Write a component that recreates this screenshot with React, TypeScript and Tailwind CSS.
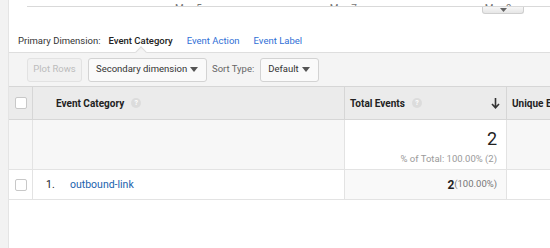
const caret = (
  <svg width="8" height="5" viewBox="0 0 8 5" className="shrink-0">
    <path d="M0 0h8L4 5z" fill="#555" />
  </svg>
)

function HelpIcon() {
  return (
    <span className="ml-[7px] inline-flex h-[10px] w-[10px] items-center justify-center rounded-full bg-[#dcdcdc] text-[7px] font-bold leading-none text-white">
      ?
    </span>
  )
}

function Checkbox({ size = 12 }: { size?: number }) {
  return (
    <span
      className="block rounded-[2px] border border-[#c8c8c8] bg-white"
      style={{ width: size, height: size }}
    />
  )
}

export default function App() {
  return (
    <div className="flex h-[248px] w-[550px] overflow-hidden bg-white font-['Roboto',sans-serif] text-[#222]">
      {/* left rail */}
      <div className="w-[9px] shrink-0 border-r border-[#e4e4e4] bg-[#f2f2f2]" />

      <div className="flex min-w-0 flex-1 flex-col">
        {/* tail of the chart above */}
        <div className="ml-[18px] flex h-[6px] items-end overflow-hidden text-[10px] leading-[12px] text-[#777]">
          <span className="mb-[-9px] ml-[2px]">...</span>
          <span className="mb-[-9px] ml-[138px]">May 5</span>
          <span className="mb-[-9px] ml-[128px]">May 7</span>
          <span className="mb-[-9px] ml-[128px]">May 9</span>
        </div>
        <div className="ml-[18px] h-[1px] bg-[#d9d9d9]" />
        <div className="ml-[473px] flex h-[7px] w-[42px] items-center justify-center rounded-b-[3px] border border-t-0 border-[#cfcfcf] bg-gradient-to-b from-[#f7f7f7] to-[#e6e6e6]">
          <svg width="7" height="4" viewBox="0 0 7 4">
            <path d="M0 0h7L3.5 4z" fill="#666" />
          </svg>
        </div>

        {/* primary dimension */}
        <div className="mt-[16px] flex h-[22px] items-center whitespace-nowrap pl-[9px] text-[9.5px]">
          <span className="text-[#333]">Primary Dimension:</span>
          <span className="ml-[8px] font-medium text-[#222]">Event Category</span>
          <span className="ml-[14px] text-[#2f6fd6]">Event Action</span>
          <span className="ml-[14px] text-[#2f6fd6]">Event Label</span>
        </div>

        {/* toolbar */}
        <div className="relative flex h-[34px] items-center whitespace-nowrap border-t border-[#dedede] bg-[#f4f4f4] pl-[18px] text-[9.5px]">
          <span className="absolute left-[128px] top-[-5px] h-[8px] w-[8px] rotate-45 border-l border-t border-[#dedede] bg-[#f4f4f4]" />
          <button className="h-[24px] w-[55px] rounded-[3px] border border-[#e2e2e2] bg-[#f1f1f1] text-[#bcbcbc]">
            Plot Rows
          </button>
          <button className="ml-[6px] flex h-[24px] w-[119px] items-center justify-between rounded-[3px] border border-[#d3d3d3] bg-[#fafafa] pl-[7px] pr-[8px] text-[#333]">
            <span>Secondary dimension</span>
            {caret}
          </button>
          <span className="ml-[5px] text-[#666]">Sort Type:</span>
          <button className="ml-[6px] flex h-[24px] w-[59px] items-center justify-between rounded-[3px] border border-[#d3d3d3] bg-[#fafafa] pl-[7px] pr-[8px] text-[#333]">
            <span>Default</span>
            {caret}
          </button>
        </div>

        {/* table */}
        <div className="grid grid-cols-[24px_312px_162px_1fr] text-[10px]">
          {/* header */}
          <div className="flex h-[34px] items-center justify-center border-b border-r border-t border-[#d6d6d6] bg-[#ebebeb]">
            <Checkbox />
          </div>
          <div className="flex h-[34px] items-center border-b border-r border-t border-[#d6d6d6] bg-[#ebebeb] pl-[23px] font-bold text-[#222]">
            Event Category
            <HelpIcon />
          </div>
          <div className="flex h-[34px] items-center border-b border-r border-t border-[#d6d6d6] bg-[#ebebeb] pl-[5px] pr-[6px] font-bold text-[#222]">
            Total Events
            <HelpIcon />
            <svg width="9" height="11" viewBox="0 0 9 11" className="ml-auto">
              <path d="M4.5 0v9.5M1 6l3.5 3.8L8 6" stroke="#333" strokeWidth="1.6" fill="none" />
            </svg>
          </div>
          <div className="flex h-[34px] items-center overflow-hidden whitespace-nowrap border-b border-t border-[#d6d6d6] bg-[#ebebeb] pl-[5px] font-bold text-[#222]">
            Unique Events
          </div>

          {/* summary row */}
          <div className="h-[50px] border-b border-r border-[#e3e3e3] bg-[#f7f7f7]" />
          <div className="h-[50px] border-b border-r border-[#e3e3e3] bg-[#f7f7f7]" />
          <div className="flex h-[50px] flex-col items-end border-b border-r border-[#e3e3e3] bg-white pr-[9px] pt-[8px]">
            <span className="text-[18px] leading-[22px] text-[#222]">2</span>
            <span className="mt-[3px] text-[9.5px] leading-[12px] text-[#9a9a9a]">% of Total: 100.00% (2)</span>
          </div>
          <div className="h-[50px] border-b border-[#e3e3e3] bg-[#f7f7f7]" />

          {/* data row */}
          <div className="flex h-[30px] items-center justify-center border-b border-r border-[#e3e3e3] bg-white">
            <Checkbox size={12} />
          </div>
          <div className="flex h-[30px] items-center border-b border-r border-[#e3e3e3] bg-white pl-[13px] text-[10.5px]">
            <span className="w-[24px] text-[#222]">1.</span>
            <span className="text-[#1a62ad]">outbound-link</span>
          </div>
          <div className="flex h-[30px] items-center justify-end border-b border-r border-[#e3e3e3] bg-[#f9f9f9] pr-[9px]">
            <span className="text-[12px] font-bold text-[#222]">2</span>
            <span className="text-[9.5px] text-[#777]">(100.00%)</span>
          </div>
          <div className="h-[30px] border-b border-[#e3e3e3] bg-white" />
        </div>
      </div>
    </div>
  )
}
